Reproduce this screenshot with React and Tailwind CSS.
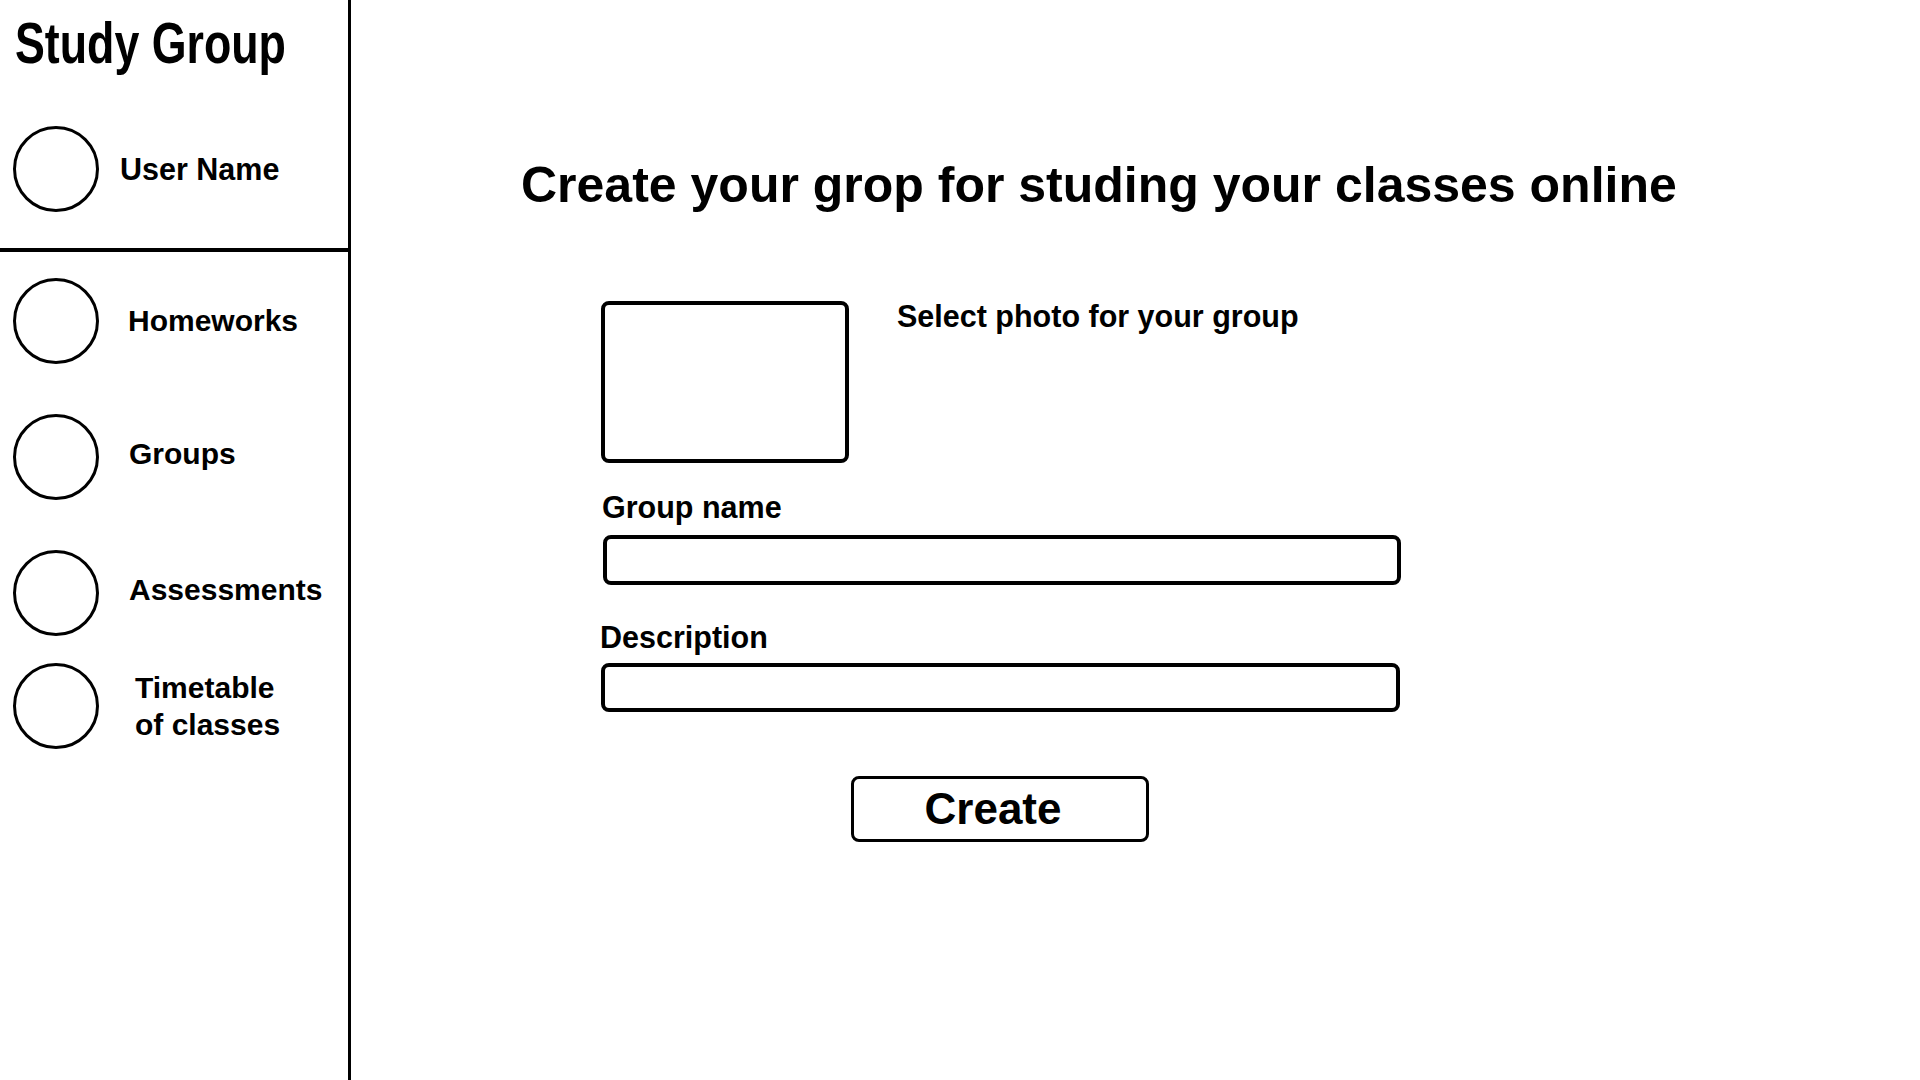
import React from 'react';

const navItems = [
  { label: 'Homeworks', gap: 'ml-[29px]', shift: '' },
  { label: 'Groups', gap: 'ml-[30px]', shift: '-mt-[6px]' },
  { label: 'Assessments', gap: 'ml-[30px]', shift: '-mt-[6px]' },
];

const Circle = () => (
  <div className="w-[86px] h-[86px] rounded-full border-[3px] border-black shrink-0" />
);

const App = () => {
  return (
    <div className="flex h-screen w-full bg-white text-black font-['Liberation_Sans',Arial,sans-serif] font-bold overflow-hidden">

      {/* SIDEBAR */}
      <aside className="w-[351px] h-full border-r-[3px] border-black flex flex-col shrink-0">
        <div className="border-b-4 border-black pl-[15px] pt-[15px] pb-[36px]">
          <h1 className="inline-block text-[57px] leading-none origin-left scale-x-[0.785] whitespace-nowrap">
            Study Group
          </h1>
          <div className="flex items-center mt-[54px] -ml-[2px]">
            <Circle />
            <span className="ml-[21px] text-[30.5px] leading-none">User Name</span>
          </div>
        </div>

        <nav className="flex flex-col pl-[13px] pt-[26px]">
          {navItems.map((item) => (
            <div key={item.label} className="flex items-center mb-[50px]">
              <Circle />
              <span className={`${item.gap} ${item.shift} text-[30px] leading-none`}>{item.label}</span>
            </div>
          ))}
          <div className="flex items-center -mt-[23px]">
            <Circle />
            <span className="ml-[36px] text-[30px] leading-[37px]">
              Timetable<br />of classes
            </span>
          </div>
        </nav>
      </aside>

      {/* MAIN */}
      <main className="flex-1 flex flex-col pl-[170px] pt-[160px]">
        <h2 className="text-[50px] leading-none whitespace-nowrap">
          Create your grop for studing your classes online
        </h2>

        <div className="ml-[80px] mt-[91px] flex flex-col">
          <div className="flex items-start">
            <div className="w-[248px] h-[162px] border-4 border-black rounded-[8px]" />
            <span className="ml-[48px] text-[30.5px] leading-none">Select photo for your group</span>
          </div>

          <label className="mt-[29px] ml-[1px] text-[30.5px] leading-none">Group name</label>
          <input
            type="text"
            className="mt-[12px] ml-[2px] w-[798px] h-[50px] border-4 border-black rounded-[8px] outline-none px-3"
          />

          <label className="mt-[37px] -ml-[1px] text-[30.5px] leading-none">Description</label>
          <input
            type="text"
            className="mt-[11px] w-[799px] h-[49px] border-4 border-black rounded-[8px] outline-none px-3"
          />

          <button className="mt-[64px] ml-[250px] w-[298px] h-[66px] border-[3px] border-black rounded-[8px] bg-white text-[44px] leading-none pr-[14px]">
            Create
          </button>
        </div>
      </main>
    </div>
  );
};

export default App;
